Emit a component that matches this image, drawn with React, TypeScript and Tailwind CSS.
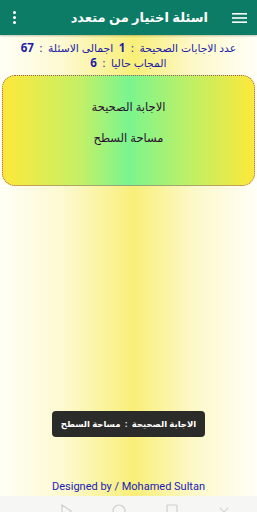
import React from "react";

const ar = { fontFamily: '"Noto Sans", "DejaVu Sans", sans-serif' };

function NavBar() {
  return (
    <div className="h-[16px] bg-[#f6f6f4] flex items-start justify-around px-4 overflow-hidden">
      <svg width="14" height="14" viewBox="0 0 14 14" className="mt-[8px] ml-6">
        <path d="M3 1 L12 7 L3 13 Z" fill="none" stroke="#cfcfcf" strokeWidth="1.2" />
      </svg>
      <svg width="14" height="14" viewBox="0 0 14 14" className="mt-[8px]">
        <circle cx="7" cy="7" r="6" fill="none" stroke="#cfcfcf" strokeWidth="1.2" />
      </svg>
      <svg width="14" height="14" viewBox="0 0 14 14" className="mt-[8px]">
        <rect x="2" y="1" width="10" height="12" rx="1" fill="none" stroke="#cfcfcf" strokeWidth="1.2" />
      </svg>
      <svg width="12" height="12" viewBox="0 0 12 12" className="mt-[10px] -mr-2">
        <path d="M2 2 L10 10 M10 2 L2 10" stroke="#d6d6d6" strokeWidth="1.2" />
      </svg>
    </div>
  );
}

export default function App() {
  return (
    <div className="w-[257px] h-[512px] flex flex-col bg-[linear-gradient(to_right,#fffff6_0%,#fdf9cf_25%,#f8ef78_52%,#fdf8c8_75%,#fffff8_100%)] overflow-hidden">
      {/* app bar */}
      <div dir="rtl" className="h-[35px] bg-[#0d7c66] flex items-center px-[10px] shrink-0 shadow-[0_1px_2px_rgba(0,0,0,0.25)]">
        <svg width="15" height="12" viewBox="0 0 15 12" className="shrink-0 ml-[24px]">
          <rect x="0" y="1" width="15" height="1.6" fill="#fff" />
          <rect x="0" y="5.2" width="15" height="1.6" fill="#fff" />
          <rect x="0" y="9.4" width="15" height="1.6" fill="#fff" />
        </svg>
        <span style={ar} className="text-white text-[13px] font-bold leading-none">
          اسئلة اختيار من متعدد
        </span>
        <div className="mr-auto flex flex-col gap-[2px] pl-[3px]">
          <span className="w-[3px] h-[3px] bg-white rounded-full" />
          <span className="w-[3px] h-[3px] bg-white rounded-full" />
          <span className="w-[3px] h-[3px] bg-white rounded-full" />
        </div>
      </div>

      {/* counters */}
      <div dir="rtl" style={ar} className="text-[#1c1ca6] text-[10.8px] leading-[15px] text-center pt-[5px]">
        <div>
          عدد الاجابات الصحيحة&nbsp; :&nbsp; <b className="text-[11.5px]">1</b>&nbsp; اجمالى الاسئلة&nbsp; :&nbsp; <b className="text-[11.5px]">67</b>
        </div>
        <div>
          المجاب حاليا&nbsp; :&nbsp; <b className="text-[11.5px]">6</b>
        </div>
      </div>

      {/* answer card */}
      <div className="mx-[2px] mt-[5px] h-[111px] rounded-[13px] border border-dotted border-[#9c5a6a] bg-[linear-gradient(to_right,#fde83a_0%,#c6f065_30%,#7af58e_50%,#b8f06a_72%,#fde83a_100%)] flex flex-col items-center pt-[25px] gap-[19px]">
        <div dir="rtl" style={ar} className="text-[11.5px] text-[#2a1030] leading-[12px]">
          الاجابة الصحيحة
        </div>
        <div dir="rtl" style={ar} className="text-[11.5px] text-[#2a1030] leading-[12px]">
          مساحة السطح
        </div>
      </div>

      <div className="flex-1" />

      {/* toast */}
      <div className="flex justify-center">
        <div dir="rtl" style={ar} className="bg-[#2b2b29] text-white text-[8.5px] font-semibold rounded-[4px] px-[9px] h-[26px] flex items-center">
          الاجابة الصحيحة&nbsp; :&nbsp; مساحة السطح
        </div>
      </div>

      <div className="h-[43px]" />

      <div style={{ fontFamily: "Roboto, sans-serif" }} className="text-center text-[#2020b8] text-[11px] leading-[14px] pb-[2px]">
        Designed by / Mohamed Sultan
      </div>

      <NavBar />
    </div>
  );
}
